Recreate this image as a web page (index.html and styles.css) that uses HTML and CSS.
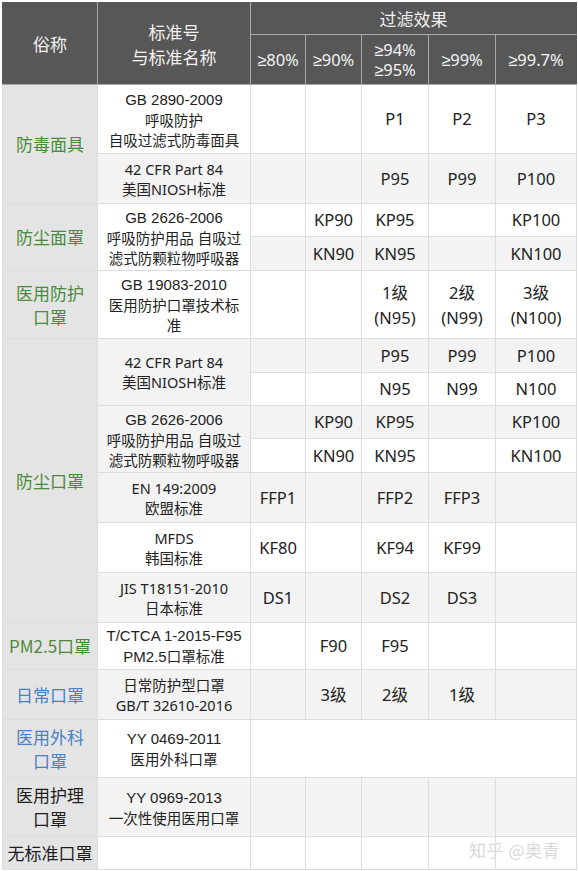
FILE: index.html
```html
<!DOCTYPE html>
<html lang="zh-CN">
<head>
<meta charset="utf-8">
<title>口罩标准对照</title>
<link rel="stylesheet" href="styles.css">
</head>
<body>
<div class="wrap">
<table class="grid">
  <colgroup>
    <col class="c1"><col class="c2"><col class="c3"><col class="c4"><col class="c5"><col class="c6"><col class="c7">
  </colgroup>
  <thead>
    <tr class="h32">
      <th rowspan="2">俗称</th>
      <th rowspan="2" class="tall">标准号<br>与标准名称</th>
      <th colspan="5">过滤效果</th>
    </tr>
    <tr class="h50">
      <th class="pct"><span class="ge">≥</span>80%</th>
      <th class="pct"><span class="ge">≥</span>90%</th>
      <th class="pct tight"><div><span class="ge">≥</span>94%</div><div><span class="ge">≥</span>95%</div></th>
      <th class="pct"><span class="ge">≥</span>99%</th>
      <th class="pct"><span class="ge">≥</span>99.7%</th>
    </tr>
  </thead>
  <tbody>
    <tr class="h69 w">
      <td rowspan="2" class="name green">防毒面具</td>
      <td class="std"><span class="hv">GB 2890-2009</span><br>呼吸防护<br>自吸过滤式防毒面具</td>
      <td></td><td></td><td class="v">P1</td><td class="v">P2</td><td class="v">P3</td>
    </tr>
    <tr class="h50 g">
      <td class="std">42 CFR Part 84<br>美国NIOSH标准</td>
      <td></td><td></td><td class="v">P95</td><td class="v">P99</td><td class="v">P100</td>
    </tr>
    <tr class="h33 w">
      <td rowspan="2" class="name green">防尘面罩</td>
      <td rowspan="2" class="std"><span class="hv">GB 2626-2006</span><br>呼吸防护用品 自吸过<br>滤式防颗粒物呼吸器</td>
      <td></td><td class="v">KP90</td><td class="v">KP95</td><td></td><td class="v">KP100</td>
    </tr>
    <tr class="h34 g">
      <td></td><td class="v">KN90</td><td class="v">KN95</td><td></td><td class="v">KN100</td>
    </tr>
    <tr class="h68 w">
      <td class="name green">医用防护<br>口罩</td>
      <td class="std"><span class="hv">GB 19083-2010</span><br>医用防护口罩技术标<br>准</td>
      <td></td><td></td><td class="v lv">1级<br>(N95)</td><td class="v lv">2级<br>(N99)</td><td class="v lv">3级<br>(N100)</td>
    </tr>
    <tr class="h34 g">
      <td rowspan="7" class="name green">防尘口罩</td>
      <td rowspan="2" class="std">42 CFR Part 84<br>美国NIOSH标准</td>
      <td></td><td></td><td class="v">P95</td><td class="v">P99</td><td class="v">P100</td>
    </tr>
    <tr class="h33 w">
      <td></td><td></td><td class="v">N95</td><td class="v">N99</td><td class="v">N100</td>
    </tr>
    <tr class="h33 g">
      <td rowspan="2" class="std"><span class="hv">GB 2626-2006</span><br>呼吸防护用品 自吸过<br>滤式防颗粒物呼吸器</td>
      <td></td><td class="v">KP90</td><td class="v">KP95</td><td></td><td class="v">KP100</td>
    </tr>
    <tr class="h34 w">
      <td></td><td class="v">KN90</td><td class="v">KN95</td><td></td><td class="v">KN100</td>
    </tr>
    <tr class="h50 g">
      <td class="std">EN 149:2009<br>欧盟标准</td>
      <td class="v">FFP1</td><td></td><td class="v">FFP2</td><td class="v">FFP3</td><td></td>
    </tr>
    <tr class="h50 w">
      <td class="std">MFDS<br>韩国标准</td>
      <td class="v">KF80</td><td></td><td class="v">KF94</td><td class="v">KF99</td><td></td>
    </tr>
    <tr class="h50 g">
      <td class="std">JIS T18151-2010<br>日本标准</td>
      <td class="v">DS1</td><td></td><td class="v">DS2</td><td class="v">DS3</td><td></td>
    </tr>
    <tr class="h47 w">
      <td class="name green">PM2.5口罩</td>
      <td class="std"><span class="hv">T/CTCA 1-2015-F95<br>PM2.5</span>口罩标准</td>
      <td></td><td class="v">F90</td><td class="v">F95</td><td></td><td></td>
    </tr>
    <tr class="h50 g">
      <td class="name blue">日常口罩</td>
      <td class="std">日常防护型口罩<br>GB/T 32610-2016</td>
      <td></td><td class="v">3级</td><td class="v">2级</td><td class="v">1级</td><td></td>
    </tr>
    <tr class="h58 w">
      <td class="name blue">医用外科<br>口罩</td>
      <td class="std"><span class="hv">YY 0469-2011</span><br>医用外科口罩</td>
      <td colspan="5"></td>
    </tr>
    <tr class="h59 g">
      <td class="name dark">医用护理<br>口罩</td>
      <td class="std"><span class="hv">YY 0969-2013</span><br>一次性使用医用口罩</td>
      <td></td><td></td><td></td><td></td><td></td>
    </tr>
    <tr class="h33 w">
      <td class="name dark small">无标准口罩</td>
      <td></td><td></td><td></td><td></td><td></td><td></td>
    </tr>
  </tbody>
</table>
<div class="mark">知乎 @奥青</div>
</div>
</body>
</html>
```

FILE: styles.css
```css
html, body {
  margin: 0;
  padding: 0;
  background: #ffffff;
}
body {
  font-family: "Noto Sans", "Noto Sans CJK SC", sans-serif;
  color: #222222;
}
.wrap {
  position: relative;
  padding: 2px 0 0 2px;
  width: 574px;
}
.grid {
  border-collapse: collapse;
  table-layout: fixed;
  width: 574px;
}
.c1 { width: 95px; }
.c2 { width: 153px; }
.c3 { width: 55px; }
.c4 { width: 56px; }
.c5 { width: 67px; }
.c6 { width: 67px; }
.c7 { width: 81px; }

th {
  background: #575757;
  color: #f2f2f2;
  font-weight: normal;
  font-size: 17px;
  line-height: 25px;
  border: 1px solid #a9a9a9;
  padding: 0;
  text-align: center;
  vertical-align: middle;
  font-family: "Noto Sans CJK SC", sans-serif;
}
th.pct {
  font-size: 16.5px;
  font-family: "Noto Sans", "Noto Sans CJK SC", sans-serif;
  white-space: nowrap;
}
.ge {
  font-family: "Liberation Sans", "DejaVu Sans", sans-serif;
}
th.tight { line-height: 20px; }
th.tight div { height: 20px; line-height: 20px; }
thead tr:first-child th { border-top-color: #575757; }
thead tr th:first-child { border-left-color: #575757; }
thead tr th:last-child { border-right-color: #575757; }

td {
  border: 1px solid #dddddd;
  padding: 0;
  text-align: center;
  vertical-align: middle;
  font-size: 17px;
  line-height: 24px;
}
tr.w td { background: #ffffff; }
tr.g td { background: #f3f3f3; }
tr td.name {
  background: #e4e4e4;
  font-family: "Noto Sans CJK SC", sans-serif;
  font-size: 17px;
  line-height: 24px;
}
.green { color: #4a8b3b; }
.blue { color: #4b80c2; }
.dark { color: #1e1e1e; }
td.small { font-size: 16px; }
td.std {
  font-family: "Noto Sans", "Noto Sans CJK SC", sans-serif;
  font-size: 14.5px;
  line-height: 20px;
  color: #222222;
}
.hv {
  font-family: "Liberation Sans", "Noto Sans CJK SC", sans-serif;
  font-size: 15px;
}
td.v {
  font-size: 16.5px;
}
td.lv {
  line-height: 25px;
}

.h32 { height: 32px; }
.h33 { height: 33px; }
.h34 { height: 34px; }
.h47 { height: 47px; }
.h50 { height: 50px; }
.h58 { height: 58px; }
.h59 { height: 59px; }
.h68 { height: 68px; }
.h69 { height: 69px; }

.mark {
  position: absolute;
  right: 16px;
  bottom: 8px;
  font-family: "Noto Sans CJK SC", sans-serif;
  font-size: 17px;
  color: #d8d8d8;
  text-shadow: 0 0 1px #ffffff;
  letter-spacing: 0.5px;
}
```
